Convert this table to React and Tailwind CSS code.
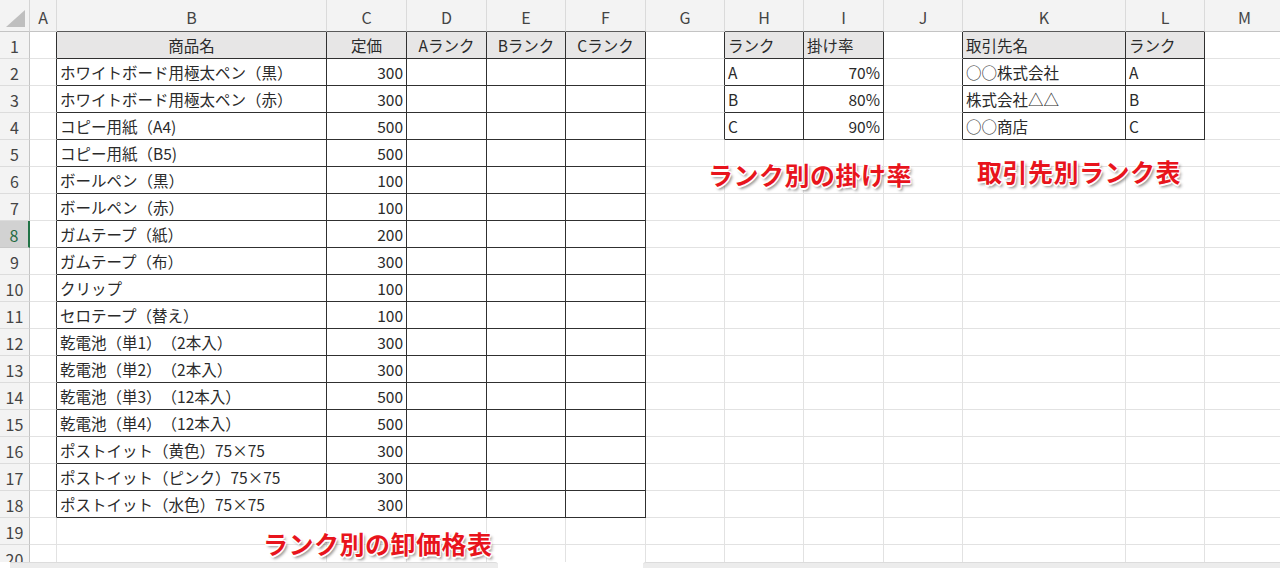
import React from "react";

// 列幅（行番号列 + A〜M）
const LETTERS = ["", "A", "B", "C", "D", "E", "F", "G", "H", "I", "J", "K", "L", "M"];
const ROW_COUNT = 20;
const SELECTED_ROW = 8;

const products = [
  ["ホワイトボード用極太ペン（黒）", 300],
  ["ホワイトボード用極太ペン（赤）", 300],
  ["コピー用紙（A4)", 500],
  ["コピー用紙（B5)", 500],
  ["ボールペン（黒）", 100],
  ["ボールペン（赤）", 100],
  ["ガムテープ（紙）", 200],
  ["ガムテープ（布）", 300],
  ["クリップ", 100],
  ["セロテープ（替え）", 100],
  ["乾電池（単1）（2本入）", 300],
  ["乾電池（単2）（2本入）", 300],
  ["乾電池（単3）（12本入）", 500],
  ["乾電池（単4）（12本入）", 500],
  ["ポストイット（黄色）75×75", 300],
  ["ポストイット（ピンク）75×75", 300],
  ["ポストイット（水色）75×75", 300],
];

const rates = [
  ["A", "70%"],
  ["B", "80%"],
  ["C", "90%"],
];

const clients = [
  ["○○株式会社", "A"],
  ["株式会社△△", "B"],
  ["○○商店", "C"],
];

// セルの中身を組み立てる
const buildCells = () => {
  const cells = {};
  const put = (r, c, v, align = "left", head = false) => {
    cells[`${r}-${c}`] = { v, align, head };
  };

  put(1, 2, "商品名", "center", true);
  put(1, 3, "定価", "center", true);
  put(1, 4, "Aランク", "center", true);
  put(1, 5, "Bランク", "center", true);
  put(1, 6, "Cランク", "center", true);
  products.forEach(([name, price], i) => {
    put(i + 2, 2, name);
    put(i + 2, 3, String(price), "right");
    put(i + 2, 4, "");
    put(i + 2, 5, "");
    put(i + 2, 6, "");
  });

  put(1, 8, "ランク", "left", true);
  put(1, 9, "掛け率", "left", true);
  rates.forEach(([rank, rate], i) => {
    put(i + 2, 8, rank);
    put(i + 2, 9, rate, "right");
  });

  put(1, 11, "取引先名", "left", true);
  put(1, 12, "ランク", "left", true);
  clients.forEach(([name, rank], i) => {
    put(i + 2, 11, name);
    put(i + 2, 12, rank);
  });

  return cells;
};

const inTable = (r, c) => {
  if (r >= 1 && r <= 18 && c >= 2 && c <= 6) return true;
  if (r >= 1 && r <= 4 && (c === 8 || c === 9 || c === 11 || c === 12)) return true;
  return false;
};

const alignClass = {
  left: "justify-start pl-[3px]",
  center: "justify-center",
  right: "justify-end pr-[3px]",
};

const Corner = () => (
  <div className="bg-[#f3f3f3] border-r border-b border-r-[#d4d4d4] border-b-[#c4c4c4] relative">
    <svg className="absolute right-[4px] bottom-[4px]" width="19" height="17" viewBox="0 0 19 17">
      <polygon points="19,0 19,17 0,17" fill="#bfbfbf" />
    </svg>
  </div>
);

const Label = ({ children, className }) => (
  <div
    className={`absolute whitespace-nowrap text-[25px] font-bold leading-none tracking-[0.5px] text-[#e8141c] [text-shadow:-1px_-1px_0_#fff,1px_-1px_0_#fff,-1px_1px_0_#fff,1px_1px_0_#fff,0_2px_0_#fff,2px_3px_3px_rgba(0,0,0,0.45)] ${className}`}
  >
    {children}
  </div>
);

export default function App() {
  const cells = buildCells();
  const rows = [];

  for (let r = 0; r <= ROW_COUNT; r++) {
    for (let c = 0; c < LETTERS.length; c++) {
      const key = `${r}-${c}`;

      if (r === 0 && c === 0) {
        rows.push(<Corner key={key} />);
        continue;
      }

      // 列見出し
      if (r === 0) {
        rows.push(
          <div
            key={key}
            className={`bg-[#f3f3f3] border-r border-b border-r-[#dadada] flex items-center justify-center pt-[3px] text-[16px] text-[#444] ${
              inTable(1, c) ? "border-b-[#5a5a5a]" : "border-b-[#c4c4c4]"
            }`}
          >
            {LETTERS[c]}
          </div>
        );
        continue;
      }

      // 行番号
      if (c === 0) {
        const selected = r === SELECTED_ROW;
        rows.push(
          <div
            key={key}
            className={`border-b flex items-center justify-center pt-[2px] text-[16px] ${
              selected
                ? "bg-[#d2d2d2] text-[#1f6b43] border-r-2 border-r-[#217346] border-b-[#c8c8c8]"
                : "bg-[#f3f3f3] text-[#444] border-r border-r-[#c4c4c4] border-b-[#dcdcdc]"
            }`}
          >
            {r}
          </div>
        );
        continue;
      }

      const cell = cells[key];
      const darkRight = inTable(r, c) || inTable(r, c + 1);
      const darkBottom = inTable(r, c) || inTable(r + 1, c);
      rows.push(
        <div
          key={key}
          className={`border-r border-b flex items-center pt-[2px] whitespace-nowrap overflow-hidden text-[15.5px] text-[#2a2a2a] [text-spacing-trim:space-all] ${
            darkRight ? "border-r-[#303030]" : "border-r-[#e2e2e2]"
          } ${darkBottom ? "border-b-[#303030]" : "border-b-[#e2e2e2]"} ${
            cell && cell.head ? "bg-[#e7e6e6]" : "bg-white"
          } ${cell ? alignClass[cell.align] : ""}`}
        >
          {cell ? cell.v : null}
        </div>
      );
    }
  }

  return (
    <div className="w-[1280px] h-[568px] overflow-hidden bg-white font-['Noto_Sans_CJK_JP','Noto_Sans',sans-serif] flex flex-col">
      <div className="relative h-[562px] overflow-hidden">
        <div className="grid grid-cols-[30px_27px_270px_80px_80px_79px_80px_79px_79px_80px_79px_163px_79px_80px] grid-rows-[32px_repeat(20,27px)]">
          {rows}
        </div>

        <Label className="left-[263px] top-[531px]">ランク別の卸価格表</Label>
        <Label className="left-[708px] top-[162px]">ランク別の掛け率</Label>
        <Label className="left-[977px] top-[159px]">取引先別ランク表</Label>
      </div>

      {/* 下部のスクロールバー */}
      <div className="flex-1 flex bg-white">
        <div className="ml-[10px] w-[488px] bg-[#ececec] border-t border-[#dcdcdc] rounded-tr-[3px]" />
        <div className="ml-[145px] flex-1 bg-[#ececec] border-t border-[#dcdcdc] rounded-tl-[3px]" />
      </div>
    </div>
  );
}
